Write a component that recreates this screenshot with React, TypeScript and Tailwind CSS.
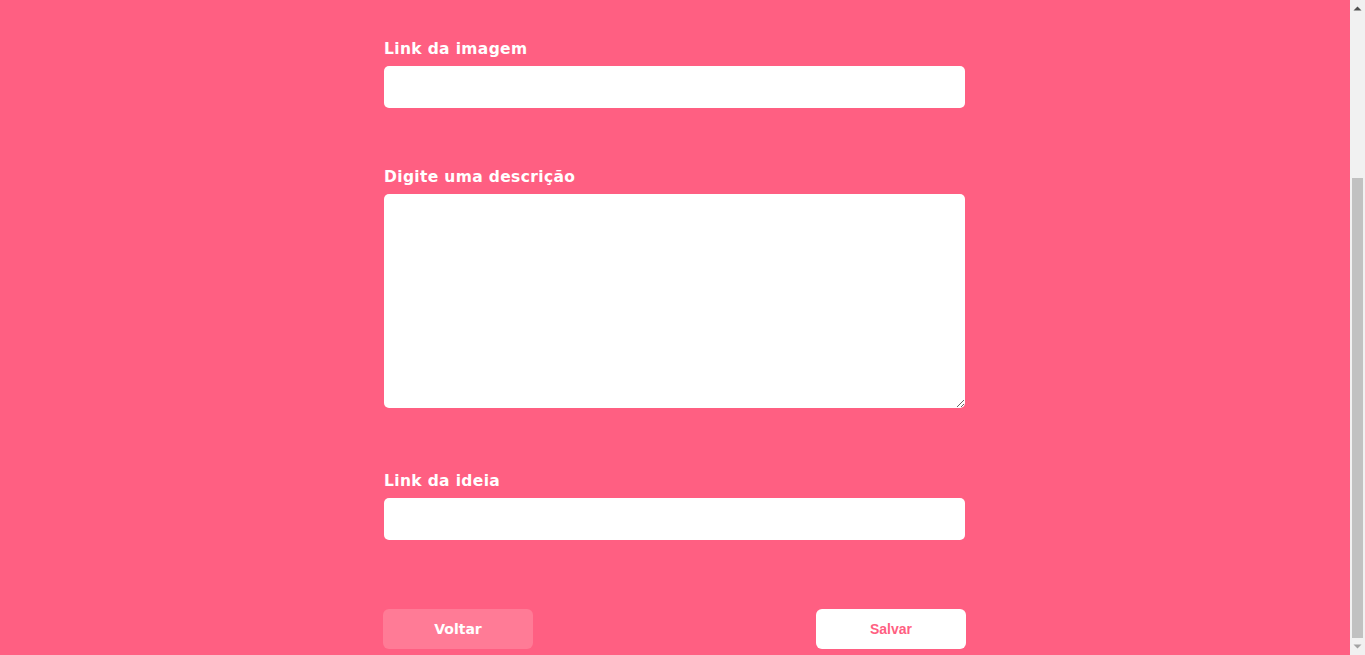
export default function App() {
  const label =
    "block text-white text-[15.5px] font-bold leading-[20px] tracking-[0.35px] pt-px mb-[7px] font-['DejaVu_Sans',sans-serif]";

  return (
    <div className="h-[655px] w-full flex overflow-hidden bg-[#ff5f82]">
      <main className="flex-1 min-w-0 flex flex-col pr-px">
        <form
          className="w-[581px] mx-auto flex flex-col pt-[38px]"
          onSubmit={(e) => e.preventDefault()}
        >
          <label className={label}>Link da imagem</label>
          <input
            type="text"
            className="h-[42px] w-full bg-white rounded-[5px] outline-none px-3"
          />
          <label className={label + " mt-[58px]"}>Digite uma descrição</label>
          <textarea className="block h-[214px] w-full bg-white rounded-[5px] outline-none px-3 py-2" />
          <label className={label + " mt-[62px]"}>Link da ideia</label>
          <input
            type="text"
            className="h-[42px] w-full bg-white rounded-[5px] outline-none px-3"
          />
          <div className="mt-[69px] flex justify-between -mx-px">
            <button
              type="button"
              className="w-[150px] h-[40px] rounded-[6px] bg-[#ff7b96] text-white text-[14px] font-bold font-['DejaVu_Sans',sans-serif]"
            >
              Voltar
            </button>
            <button
              type="submit"
              className="w-[150px] h-[40px] rounded-[6px] bg-white text-[#ff5f82] text-[14px] font-bold font-['Liberation_Sans',sans-serif]"
            >
              Salvar
            </button>
          </div>
        </form>
      </main>
      <div className="w-[15px] shrink-0 bg-[#f1f1f1] flex flex-col items-center">
        <div className="h-[17px] w-full flex items-center justify-center">
          <svg width="9" height="5" viewBox="0 0 9 5">
            <path d="M0.5 4.5 L4.5 0.5 L8.5 4.5 Z" fill="#505050" />
          </svg>
        </div>
        <div className="flex-1 w-full flex flex-col justify-end px-[2px]">
          <div className="h-[460px] w-full bg-[#c1c1c1]" />
        </div>
        <div className="h-[17px] w-full flex items-center justify-center">
          <svg width="9" height="5" viewBox="0 0 9 5">
            <path d="M0.5 0.5 L4.5 4.5 L8.5 0.5 Z" fill="#a3a3a3" />
          </svg>
        </div>
      </div>
    </div>
  );
}
